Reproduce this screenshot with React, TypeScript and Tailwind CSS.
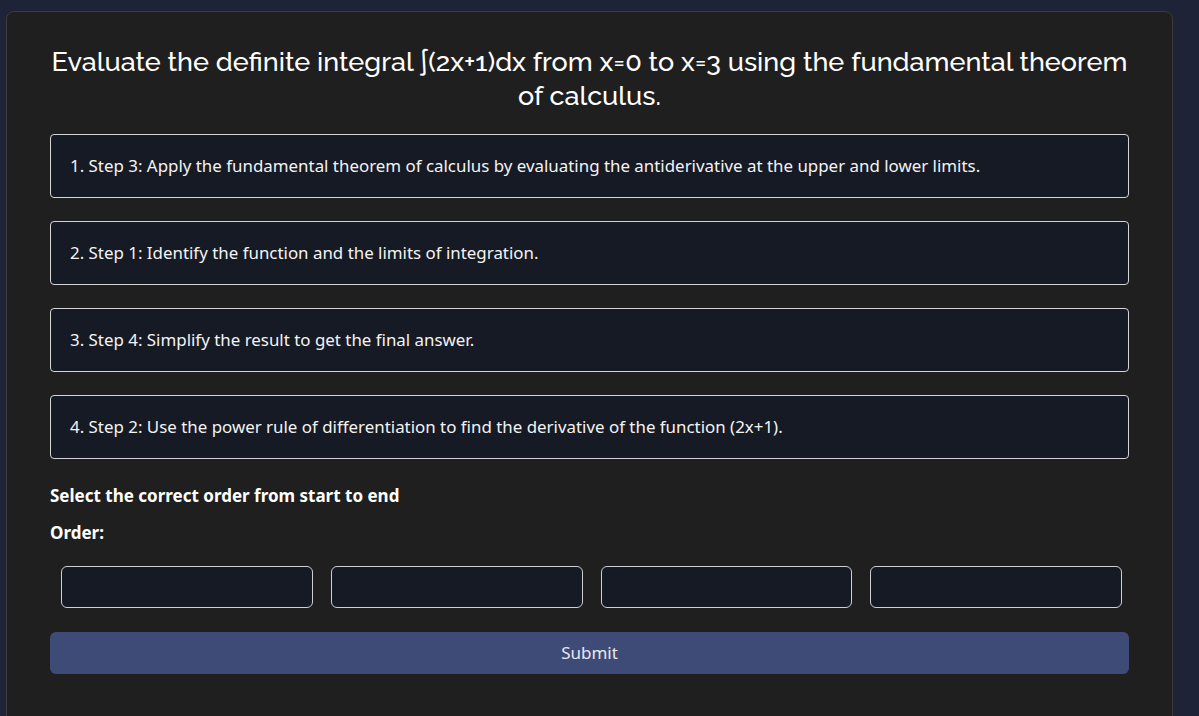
const STEPS = [
  "1. Step 3: Apply the fundamental theorem of calculus by evaluating the antiderivative at the upper and lower limits.",
  "2. Step 1: Identify the function and the limits of integration.",
  "3. Step 4: Simplify the result to get the final answer.",
  "4. Step 2: Use the power rule of differentiation to find the derivative of the function (2x+1).",
];

export default function App() {
  return (
    <div className="min-h-screen bg-[#1f2337] pl-[6px] pr-[26px] pt-[11px] overflow-hidden h-[716px]">
      <div className="bg-[#1f1f1f] border border-[#3c3c3c] rounded-[8px] px-[43px] pt-[33px] pb-10 h-[760px] font-['Noto_Sans',sans-serif] text-[#f3f3f3]">
        <h1 className="text-center text-[27px] leading-[34px] font-medium font-['Raleway','Noto_Sans',sans-serif] text-white">
          <span className="whitespace-nowrap">
            Evaluate the definite integral ∫(2x+1)dx from x=0 to x=3 using the fundamental theorem
          </span>
          <br />
          of calculus.
        </h1>

        <div className="mt-[21px] flex flex-col gap-[23px]">
          {STEPS.map((s) => (
            <div
              key={s}
              className="h-[64px] flex items-center bg-[#161a24] border border-[#d4d4d4] rounded-[4px] pl-[19px] text-[16.9px]"
            >
              {s}
            </div>
          ))}
        </div>

        <p className="mt-[25px] font-bold text-[17px] leading-6 text-white">Select the correct order from start to end</p>
        <p className="mt-[13px] font-bold text-[17px] leading-6 text-white">Order:</p>

        <div className="mt-[21px] grid grid-cols-4 gap-[18px] pl-[11px] pr-[7px]">
          {[0, 1, 2, 3].map((i) => (
            <input
              key={i}
              className="h-[42px] bg-[#161a24] border border-[#cfcfcf] rounded-[6px] px-3 text-white outline-none"
            />
          ))}
        </div>

        <button className="mt-[24px] w-full h-[42px] rounded-[6px] bg-[#3f4b77] text-[17px] text-[#e8e8ee]">
          Submit
        </button>
      </div>
    </div>
  );
}
